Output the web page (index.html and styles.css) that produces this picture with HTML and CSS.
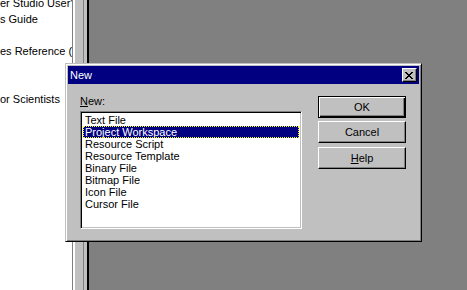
FILE: index.html
```html
<!DOCTYPE html>
<html lang="en">
<head>
    <meta charset="UTF-8">
    <title>New</title>
    <link rel="stylesheet" href="styles.css">
</head>
<body>
    <div class="contents-pane">
        <div class="contents-lines">
            <div class="line">er Studio User'</div>
            <div class="line">s Guide</div>
            <div class="line"></div>
            <div class="line">es Reference (</div>
            <div class="line"></div>
            <div class="line"></div>
            <div class="line">or Scientists</div>
        </div>
    </div>
    <div class="frame-edge"></div>
    <div class="workspace"></div>

    <div class="dialog">
        <div class="title-bar">
            <span class="title-text">New</span>
            <button class="close-btn" aria-label="Close">
                <svg width="8" height="7" viewBox="0 0 8 7">
                    <path fill="#000" d="M0 0h2v1H0z M6 0h2v1H6z M1 1h2v1H1z M5 1h2v1H5z M2 2h4v1H2z M3 3h2v1H3z M2 4h4v1H2z M1 5h2v1H1z M5 5h2v1H5z M0 6h2v1H0z M6 6h2v1H6z"/>
                </svg>
            </button>
        </div>
        <div class="dialog-body">
            <div class="list-column">
                <div class="list-label"><u>N</u>ew:</div>
                <ul class="listbox">
                    <li>Text File</li>
                    <li class="selected">Project Workspace</li>
                    <li>Resource Script</li>
                    <li>Resource Template</li>
                    <li>Binary File</li>
                    <li>Bitmap File</li>
                    <li>Icon File</li>
                    <li>Cursor File</li>
                </ul>
            </div>
            <div class="button-column">
                <button class="btn btn-default">OK</button>
                <button class="btn btn-cancel">Cancel</button>
                <button class="btn"><u>H</u>elp</button>
            </div>
        </div>
    </div>
</body>
</html>
```

FILE: styles.css
```css
body {
    margin: 0;
    height: 290px;
    display: flex;
    overflow: hidden;
    background: #808080;
    font-family: 'Liberation Sans', Arial, sans-serif;
    font-size: 11px;
    color: #000;
}

.contents-pane {
    width: 72px;
    background: #fff;
}

.contents-lines {
    margin-top: -5px;
}

.line {
    height: 16px;
    line-height: 16px;
    white-space: nowrap;
}

.frame-edge {
    width: 17px;
    background: linear-gradient(to right,
        #808080 0 1px,
        #fff 1px 3px,
        #c0c0c0 3px 11px,
        #808080 11px 12px,
        #c0c0c0 12px 15px,
        #000 15px 17px);
}

.workspace {
    flex: 1;
    background: #808080;
}

/* the dialog window floats over the workspace */
.dialog {
    position: absolute;
    left: 65px;
    top: 63px;
    width: 357px;
    height: 179px;
    box-sizing: border-box;
    background: #c0c0c0;
    border: 1px solid;
    border-color: #c0c0c0 #000 #000 #c0c0c0;
    box-shadow: inset 1px 1px #fff, inset -1px -1px #808080;
    padding: 2px;
}

.title-bar {
    height: 18px;
    background: #000080;
    display: flex;
    align-items: center;
    justify-content: space-between;
    padding: 0 2px 0 2px;
}

.title-text {
    color: #fff;
    line-height: 18px;
}

.close-btn {
    width: 15px;
    height: 14px;
    padding: 0;
    margin: 0;
    box-sizing: border-box;
    background: #c0c0c0;
    border: 1px solid;
    border-color: #fff #000 #000 #fff;
    box-shadow: inset -1px -1px #808080;
    display: flex;
    align-items: center;
    justify-content: center;
}

.close-btn svg {
    display: block;
    margin-right: 1px;
}

.dialog-body {
    display: flex;
    padding: 11px 13px 0 12px;
}

.list-column {
    display: flex;
    flex-direction: column;
}

.list-label {
    line-height: 13px;
    margin-bottom: 3px;
}

.listbox {
    list-style: none;
    margin: 0;
    padding: 0;
    width: 222px;
    height: 118px;
    box-sizing: border-box;
    background: #fff;
    border: 1px solid;
    border-color: #808080 #fff #fff #808080;
    box-shadow: inset 1px 1px #000, inset -1px -1px #c0c0c0;
    padding: 2px 2px 0 2px;
}

.listbox li {
    height: 12px;
    line-height: 12px;
    padding-left: 2px;
    white-space: nowrap;
}

.listbox li.selected {
    background: #000080;
    color: #fff;
    outline: 1px dotted #ffff00;
    outline-offset: -1px;
}

.button-column {
    display: flex;
    flex-direction: column;
    margin-left: 16px;
    margin-top: 1px;
}

.btn {
    width: 88px;
    height: 22px;
    box-sizing: border-box;
    margin: 0 0 3px 0;
    padding: 0 0 1px 0;
    font-family: inherit;
    font-size: 11px;
    color: #000;
    background: #c0c0c0;
    border: 1px solid;
    border-color: #fff #000 #000 #fff;
    box-shadow: inset -1px -1px #808080;
}

.btn-default {
    border: 1px solid #000;
    box-shadow: inset 1px 1px #fff, inset -1px -1px #000, inset -2px -2px #808080;
}

.btn-cancel {
    margin-bottom: 4px;
}
```
